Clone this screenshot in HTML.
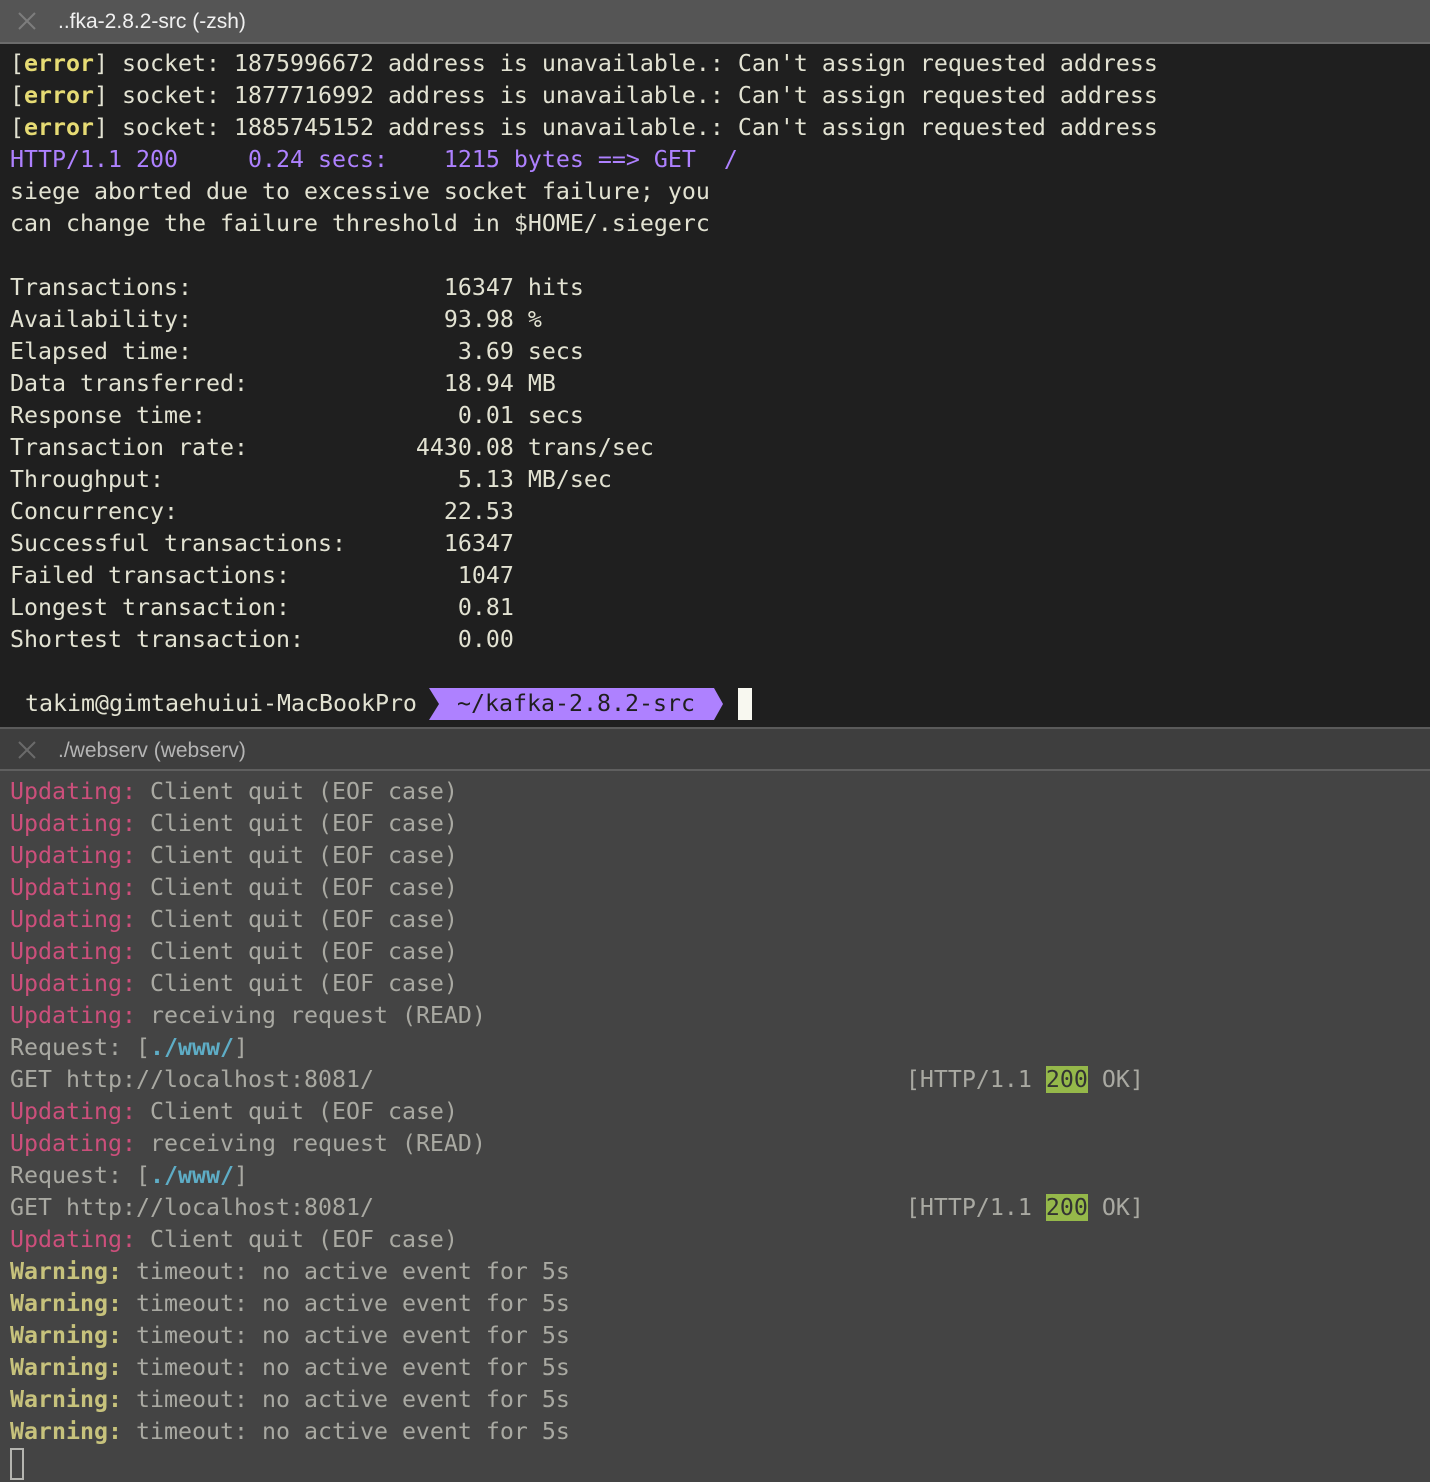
<!DOCTYPE html>
<html><head><meta charset="utf-8"><style>
*{margin:0;padding:0;box-sizing:border-box}
html,body{width:1430px;height:1482px;overflow:hidden;background:#444}
.tab{position:absolute;left:0;width:1430px;height:44px;font-family:"Liberation Sans",sans-serif;font-size:21px;}
.tab .x{position:absolute;left:17px;top:11px;width:20px;height:20px}
.tab .t{position:absolute;left:58px;top:10px}
pre{position:absolute;left:10px;font-family:"DejaVu Sans Mono","Liberation Mono",monospace;font-size:23.25px;line-height:32px;white-space:pre}
#top{top:48px;color:#e2e2d2}
#bot{top:776px;color:#a9a9a2}
.y{color:#e6db74;font-weight:bold}.p{color:#ae81ff}
.r{color:#cc4f7b}.w{color:#c7c27c;font-weight:bold}.c{color:#5eadc6;font-weight:bold}
.g{background:#95b84a;color:#333}
</style></head><body>
<div style="position:absolute;top:0;left:0;width:1430px;height:727px;background:#1f1f1f"></div>
<div class="tab" style="top:0;background:#555;border-bottom:2px solid #6b6b6b;color:#f0f0f0">
<svg class="x" viewBox="0 0 20 20"><path d="M2 2L18 18M18 2L2 18" stroke="#7d7d7d" stroke-width="2"/></svg>
<span class="t">..fka-2.8.2-src (-zsh)</span></div>
<div class="tab" style="top:727px;background:#3e3e3e;border-top:2px solid #5a5a5a;border-bottom:2px solid #5f5f5f;color:#b5b5b5">
<svg class="x" viewBox="0 0 20 20"><path d="M2 2L18 18M18 2L2 18" stroke="#6a6a6a" stroke-width="2"/></svg>
<span class="t">./webserv (webserv)</span></div>
<pre id="top">[<span class="y">error</span>] socket: 1875996672 address is unavailable.: Can't assign requested address
[<span class="y">error</span>] socket: 1877716992 address is unavailable.: Can't assign requested address
[<span class="y">error</span>] socket: 1885745152 address is unavailable.: Can't assign requested address
<span class="p">HTTP/1.1 200     0.24 secs:    1215 bytes ==&gt; GET  /</span>
siege aborted due to excessive socket failure; you
can change the failure threshold in $HOME/.siegerc

Transactions:                  16347 hits
Availability:                  93.98 %
Elapsed time:                   3.69 secs
Data transferred:              18.94 MB
Response time:                  0.01 secs
Transaction rate:            4430.08 trans/sec
Throughput:                     5.13 MB/sec
Concurrency:                   22.53
Successful transactions:       16347
Failed transactions:            1047
Longest transaction:            0.81
Shortest transaction:           0.00
</pre>
<pre style="top:688px;left:25px;color:#e2e2d2">takim@gimtaehuiui-MacBookPro</pre>
<svg style="position:absolute;left:429px;top:688px" width="295" height="32"><polygon points="0,0 285,0 294,16 285,32 0,32 10,16" fill="#ae81ff"/></svg>
<pre style="top:688px;left:457px;color:#1f1f1f">~/kafka-2.8.2-src</pre>
<div style="position:absolute;left:738px;top:688px;width:14px;height:32px;background:#f8f8f0"></div>
<pre id="bot"><span class="r">Updating:</span> Client quit (EOF case)
<span class="r">Updating:</span> Client quit (EOF case)
<span class="r">Updating:</span> Client quit (EOF case)
<span class="r">Updating:</span> Client quit (EOF case)
<span class="r">Updating:</span> Client quit (EOF case)
<span class="r">Updating:</span> Client quit (EOF case)
<span class="r">Updating:</span> Client quit (EOF case)
<span class="r">Updating:</span> receiving request (READ)
Request: [<span class="c">./www/</span>]
GET http://localhost:8081/                                      [HTTP/1.1 <span class="g">200</span> OK]
<span class="r">Updating:</span> Client quit (EOF case)
<span class="r">Updating:</span> receiving request (READ)
Request: [<span class="c">./www/</span>]
GET http://localhost:8081/                                      [HTTP/1.1 <span class="g">200</span> OK]
<span class="r">Updating:</span> Client quit (EOF case)
<span class="w">Warning:</span> timeout: no active event for 5s
<span class="w">Warning:</span> timeout: no active event for 5s
<span class="w">Warning:</span> timeout: no active event for 5s
<span class="w">Warning:</span> timeout: no active event for 5s
<span class="w">Warning:</span> timeout: no active event for 5s
<span class="w">Warning:</span> timeout: no active event for 5s
</pre>
<div style="position:absolute;left:10px;top:1448px;width:14px;height:32px;border:2px solid #b5b5b0"></div>
</body></html>
